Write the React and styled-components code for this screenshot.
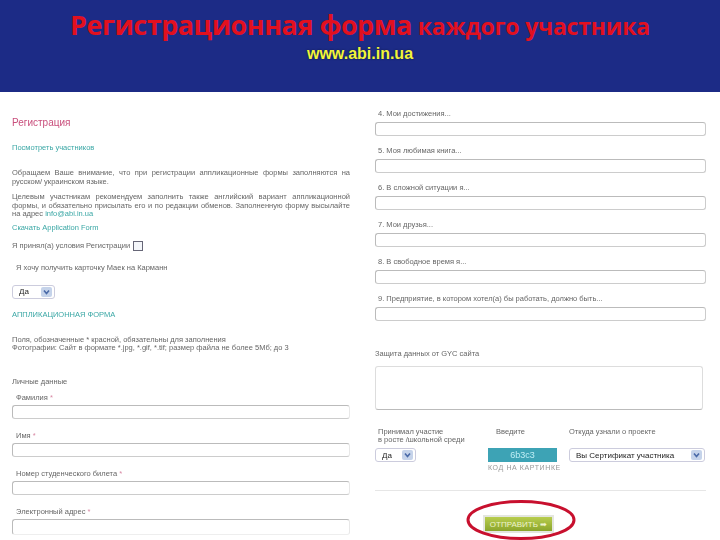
import React from "react";
import styled, { createGlobalStyle } from "styled-components";

const Global = createGlobalStyle`
  html, body { margin: 0; padding: 0; background: #fff; }
  body { width: 720px; height: 540px; overflow: hidden; font-family: "Liberation Sans", Arial, sans-serif; }
`;
const Page = styled.div`position: relative; width: 720px; height: 540px; overflow: hidden; background: #fff;`;
const Banner = styled.header`
  height: 92px; box-sizing: border-box; padding-top: 8px; background: #1c2b86; text-align: center;
`;
const Title = styled.h1`
  margin: 0; font-size: 27px; line-height: 34px; font-weight: 700; color: #e2101f; white-space: nowrap;
  font-family: "Open Sans", "Liberation Sans", sans-serif; letter-spacing: -0.5px;
  small { font-size: 23px; letter-spacing: -0.2px; margin-left: 6px; }
`;
const Url = styled.div`
  margin-top: 2px; font-size: 16px; line-height: 18px; font-weight: 700; color: #f2f53a; text-shadow: 0 0 2px #10183f;
`;
const Columns = styled.main`
  display: grid; grid-template-columns: 338px 331px; column-gap: 25px; padding-left: 12px; filter: blur(0.3px);
`;
const Left = styled.section`display: flex; flex-direction: column; font-size: 8px; color: #666; padding-top: 25px;`;
const Right = styled.section`display: flex; flex-direction: column; font-size: 8px; color: #666; padding-top: 17px;`;
const Heading = styled.h2`margin: 0; font-size: 10px; line-height: 12px; font-weight: 400; color: #c94f7c;`;
const TealLine = styled.div`margin-top: ${p => p.$top}px; line-height: 10px; font-size: 7.5px; color: #3aa7a5;`;
const Para = styled.p`
  margin: ${p => p.$top}px 0 0; line-height: 8.5px; font-size: 7.5px; color: #666; text-align: justify;
  white-space: ${p => p.$nowrap ? "nowrap" : "normal"};
  a { color: #3aa7a5; }
`;
const CheckRow = styled.div`display: flex; align-items: center; gap: 3px; margin-top: 8px; height: 10px; font-size: 7.5px;`;
const Check = styled.span`width: 8px; height: 8px; border: 1px solid #667; background: #f4f6fa;`;
const Plain = styled.div`margin-top: ${p => p.$top}px; padding-left: ${p => p.$left || 0}px; line-height: 10px; font-size: 7.5px;`;
const Pick = styled.div`
  display: flex; align-items: center; justify-content: space-between; box-sizing: border-box;
  width: ${p => p.$w}px; height: 14px; margin-top: ${p => p.$top || 0}px; padding: 0 2px 0 6px;
  border: 1px solid #ccd; border-radius: 3px; background: #fff; font-size: 8px; color: #222;
  svg { flex: none; }
`;
const Fields = styled.div`display: flex; flex-direction: column; margin-top: ${p => p.$top}px; gap: ${p => p.$gap}px;`;
const Field = styled.div`display: flex; flex-direction: column;`;
const Label = styled.label`line-height: 10px; height: 10px; padding-left: ${p => p.$left}px; font-size: 7.5px; color: #666;`;
const Star = styled.span`color: #d98aa5;`;
const Box = styled.div`
  box-sizing: border-box; height: ${p => p.$h || 14}px; margin-top: ${p => p.$gap}px;
  border: 1px solid #bbb; border-right-color: ${p => p.$open ? "#e8e8e8" : "#ccc"};
  border-bottom-color: ${p => p.$soft ? "#eee" : "#ccc"};
  border-radius: 3px; background: #fff;
`;
const TextLabel = styled(Label)`margin-top: 28px;`;
const Big = styled.div`
  box-sizing: border-box; width: 328px; height: 44px; margin-top: 7px; border: 1px solid #ddd; border-bottom-color: #bbb; border-radius: 3px;
`;
const Triple = styled.div`display: grid; grid-template-columns: 113px 81px 137px; margin-top: 18px;`;
const Cell = styled.div`display: flex; flex-direction: column;`;
const Head = styled.div`height: 20px; line-height: 8px; font-size: 7.5px; padding-left: ${p => p.$left || 0}px; white-space: nowrap;`;
const Captcha = styled.div`
  width: 69px; height: 14px; margin-top: 0; background: #3da3b5; color: #bfeef5; font-size: 9px; line-height: 14px; text-align: center;
`;
const CaptchaNote = styled.div`margin-top: 1px; line-height: 9px; font-size: 7px; color: #999; letter-spacing: .6px;`;
const Rule = styled.hr`width: 331px; margin: 18px 0 0; border: 0; border-top: 1px solid #e6e6e6;`;
const Send = styled.button`
  display: block; box-sizing: border-box; width: 67px; height: 14px; margin: 26px 0 0 110px; padding: 0;
  border: 0; outline: 2px solid #e4e6df; background: linear-gradient(#b8cd4e, #8aa52c); color: #eef3cc; font: 8px "Liberation Sans", sans-serif;
`;
const Ring = styled.svg`position: absolute; left: 465px; top: 499px; width: 112px; height: 42px;`;

const Arrow = () => (
  <svg width="11" height="10" viewBox="0 0 11 10">
    <rect width="11" height="10" rx="2" fill="#c5d3ea" />
    <path d="M3 3.5 5.5 6.5 8 3.5" fill="none" stroke="#4a6aa8" strokeWidth="1.6" />
  </svg>
);

const personal = ["Фамилия", "Имя", "Номер студенческого билета", "Электронный адрес"];
const answers = ["4. Мои достижения...", "5. Моя любимая книга...", "6. В сложной ситуации я...", "7. Мои друзья...", "8. В свободное время я...", "9. Предприятие, в котором хотел(а) бы работать, должно быть..."];

export default function App() {
  return (
    <Page>
      <Global />
      <Banner>
        <Title>Регистрационная форма<small>каждого участника</small></Title>
        <Url>www.abi.in.ua</Url>
      </Banner>
      <Columns>
        <Left>
          <Heading>Регистрация</Heading>
          <TealLine $top={14}>Посмотреть участников</TealLine>
          <Para $top={16}>Обращаем Ваше внимание, что при регистрации аппликационные формы заполняются на русском/ украинском языке.</Para>
          <Para $top={7}>Целевым участникам рекомендуем заполнить также английский вариант аппликационной формы, и обязательно присылать его и по редакции обменов. Заполненную форму высылайте на адрес <a>info@abi.in.ua</a></Para>
          <TealLine $top={4}>Скачать Application Form</TealLine>
          <CheckRow>Я принял(а) условия Регистрации <Check /></CheckRow>
          <Plain $top={12} $left={4}>Я хочу получить карточку Маек на Карманн</Plain>
          <Pick $w={43} $top={12}>Да <Arrow /></Pick>
          <TealLine $top={11}>АППЛИКАЦИОННАЯ ФОРМА</TealLine>
          <Para $top={16} $nowrap>Поля, обозначенные * красной, обязательны для заполнения</Para>
          <Para $top={0} $nowrap>Фотографии: Сайт в формате *.jpg, *.gif, *.tif; размер файла не более 5Мб; до 3</Para>
          <Plain $top={24}>Личные данные</Plain>
          <Fields $top={6} $gap={12}>
            {personal.map((t, i) => (
              <Field key={t}>
                <Label $left={4}>{t} <Star>*</Star></Label>
                <Box $gap={2} $open $soft={i === 3} $h={i === 3 ? 16 : 14} />
              </Field>
            ))}
          </Fields>
        </Left>
        <Right>
          <Fields $top={0} $gap={10}>
            {answers.map(t => (
              <Field key={t}>
                <Label $left={3}>{t}</Label>
                <Box $gap={3} />
              </Field>
            ))}
          </Fields>
          <TextLabel>Защита данных от GYC сайта</TextLabel>
          <Big />
          <Triple>
            <Cell>
              <Head $left={3}>Принимал участие<br />в росте /школьной среди</Head>
              <Pick $w={41}>Да <Arrow /></Pick>
            </Cell>
            <Cell>
              <Head $left={8}>Введите</Head>
              <Captcha>6b3c3</Captcha>
              <CaptchaNote>КОД НА КАРТИНКЕ</CaptchaNote>
            </Cell>
            <Cell>
              <Head>Откуда узнали о проекте</Head>
              <Pick $w={136}>Вы Сертификат участника <Arrow /></Pick>
            </Cell>
          </Triple>
          <Rule />
          <Send>ОТПРАВИТЬ ➡</Send>
        </Right>
      </Columns>
      <Ring viewBox="0 0 112 42">
        <ellipse cx="56" cy="21" rx="53" ry="18.5" fill="none" stroke="#c8102e" strokeWidth="3" />
      </Ring>
    </Page>
  );
}
